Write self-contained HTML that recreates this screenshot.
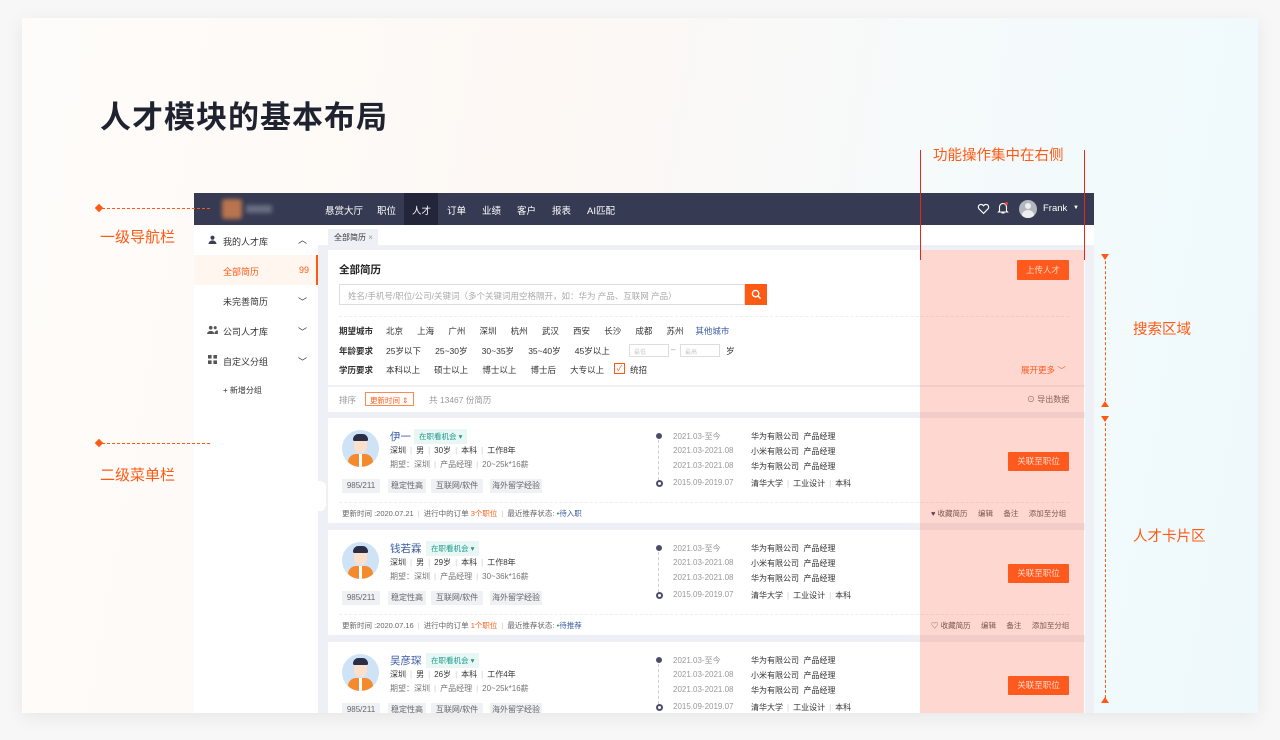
<!DOCTYPE html>
<html><head><meta charset="utf-8"><style>
*{margin:0;padding:0;box-sizing:border-box}
body{width:1280px;height:740px;background:#f7f7f7;font-family:"Liberation Sans","Noto Sans CJK SC",sans-serif;position:relative;overflow:hidden}
.a{position:absolute;white-space:nowrap}
.card{position:absolute;left:22px;top:18px;width:1236px;height:695px;background:linear-gradient(100deg,#fefcfa 0%,#fdf8f4 40%,#f4fafc 75%,#eef9fc 100%);box-shadow:0 4px 18px rgba(0,0,0,.07)}
.or{color:#ff5a14}
.nav{position:absolute;left:194px;top:193px;width:900px;height:32px;background:#363a52}
.nav .a{color:#fff;font-size:9.5px;top:10px}
.side{position:absolute;left:194px;top:225px;width:124px;height:488px;background:#fff}
.side .a{font-size:9px;color:#333}
.side .a.or{color:#ff5a14}
.gray{position:absolute;left:318px;top:225px;width:776px;height:488px;background:#eef0f5}
.wp{position:absolute;background:#fff}
.t9{font-size:8.5px;color:#333}
.g{color:#999}
.btn{position:absolute;background:#ff5a14;color:#fff;font-size:8.5px;text-align:center;border-radius:1px}
.tag{position:absolute;background:#f0f1f5;color:#666;font-size:8px;height:14px;line-height:14px;text-align:center;top:0}
.sep{color:#ccc;margin:0 4px}
</style></head><body>
<div class="card"></div>
<div class="a" style="left:100px;top:92px;font-size:31px;font-weight:bold;color:#1f2330;letter-spacing:1px">人才模块的基本布局</div>

<!-- nav -->
<div class="nav">
 <div class="a" style="left:28px;top:6px;width:20px;height:20px;background:#b8744e;border-radius:3px;filter:blur(2px)"></div>
 <div class="a" style="left:52px;top:12px;width:26px;height:8px;background:#6a6e82;filter:blur(2px)"></div>
 <div class="a" style="left:210px;top:0;width:34px;height:32px;background:#23263a"></div>
 <div class="a" style="left:131px">悬赏大厅</div>
 <div class="a" style="left:183px">职位</div>
 <div class="a" style="left:218px">人才</div>
 <div class="a" style="left:253px">订单</div>
 <div class="a" style="left:288px">业绩</div>
 <div class="a" style="left:323px">客户</div>
 <div class="a" style="left:358px">报表</div>
 <div class="a" style="left:393px">AI匹配</div>
 <svg class="a" style="left:783px;top:9px" width="13" height="13" viewBox="0 0 24 24"><path d="M12 21l-8.5-8.5a5 5 0 017-7L12 7l1.5-1.5a5 5 0 017 7z" fill="none" stroke="#fff" stroke-width="2.2"/></svg>
 <svg class="a" style="left:803px;top:8px" width="12" height="14" viewBox="0 0 24 26"><path d="M5 19V11a7 7 0 0114 0v8l2 2H3z M9 23h6" fill="none" stroke="#fff" stroke-width="2.2"/><circle cx="19" cy="4" r="3" fill="#ff3b30"/></svg>
 <div class="a" style="left:825px;top:7px;width:18px;height:18px;border-radius:50%;background:#b4b6be;overflow:hidden"><div class="a" style="left:6px;top:3px;width:6px;height:6px;border-radius:50%;background:#eee"></div><div class="a" style="left:3px;top:10px;width:12px;height:10px;border-radius:50%;background:#eee"></div></div>
 <div class="a" style="left:849px">Frank</div>
 <div class="a" style="left:879px;top:12px;font-size:6px">▼</div>
</div>

<!-- sidebar -->
<div class="side">
 <div class="a" style="left:0;top:30px;width:124px;height:30px;background:#fff6f0;border-right:2px solid #ff5a14"></div>
 <svg class="a" style="left:14px;top:10px" width="9" height="9" viewBox="0 0 10 10"><circle cx="5" cy="3" r="2.3" fill="#3a3e5a"/><path d="M0.5 10a4.5 4 0 019 0z" fill="#3a3e5a"/></svg>
 <div class="a" style="left:29px;top:10px">我的人才库</div><div class="a g" style="left:104px;top:8px">︿</div>
 <div class="a or" style="left:29px;top:40px">全部简历</div><div class="a or" style="left:105px;top:40px">99</div>
 <div class="a" style="left:29px;top:70px">未完善简历</div><div class="a g" style="left:104px;top:70px">﹀</div>
 <svg class="a" style="left:13px;top:100px" width="11" height="9" viewBox="0 0 12 10"><circle cx="4" cy="3" r="2" fill="#555"/><circle cx="9" cy="3" r="1.7" fill="#555"/><path d="M0 10a4 3.5 0 018 0z M8.5 10a3.5 3 0 013.5-4v4z" fill="#555"/></svg>
 <div class="a" style="left:29px;top:100px">公司人才库</div><div class="a g" style="left:104px;top:100px">﹀</div>
 <svg class="a" style="left:14px;top:130px" width="9" height="9" viewBox="0 0 10 10"><rect x="0" y="0" width="4" height="4" fill="#555"/><rect x="6" y="0" width="4" height="4" fill="#555"/><rect x="0" y="6" width="4" height="4" fill="#555"/><rect x="6" y="6" width="4" height="4" fill="#555"/></svg>
 <div class="a" style="left:29px;top:130px">自定义分组</div><div class="a g" style="left:104px;top:130px">﹀</div>
 <div class="a g" style="left:29px;top:160px;font-size:8px">+ 新增分组</div>
</div>

<div class="gray">
 <div class="a" style="left:0;top:0;width:776px;height:20px;background:#fff"></div>
 <div class="a" style="left:10px;top:4px;width:50px;height:16px;background:#eef0f5;font-size:8px;color:#333;padding:3px 0 0 6px">全部简历 <span class="g">×</span></div>
 <div class="a" style="left:0;top:256px;width:8px;height:30px;background:#fff;border-radius:0 6px 6px 0"></div>
</div>

<!-- search panel -->
<div class="wp" style="left:328px;top:250px;width:757px;height:135px">
 <div class="a" style="left:11px;top:12px;font-size:10.5px;font-weight:bold;color:#222">全部简历</div>
 <div class="a" style="left:11px;top:34px;width:406px;height:21px;border:1px solid #ddd;font-size:8.5px;color:#aaa;padding:5px 0 0 8px">姓名/手机号/职位/公司/关键词（多个关键词用空格隔开，如：华为 产品、互联网 产品）</div>
 <div class="a" style="left:417px;top:34px;width:22px;height:21px;background:#ff5a14"><svg style="margin:5px 0 0 6px" width="11" height="11" viewBox="0 0 12 12"><circle cx="5" cy="5" r="3.5" fill="none" stroke="#fff" stroke-width="1.5"/><path d="M7.5 7.5l3 3" stroke="#fff" stroke-width="1.5"/></svg></div>
 <div class="a" style="left:11px;top:66px;width:730px;border-top:1px dashed #eee"></div>
 <div class="a t9" style="left:11px;top:75px;font-weight:bold">期望城市</div>
 <div class="a t9" style="left:58px;top:75px">北京&nbsp;&nbsp;&nbsp;&nbsp;&nbsp;&nbsp;上海&nbsp;&nbsp;&nbsp;&nbsp;&nbsp;&nbsp;广州&nbsp;&nbsp;&nbsp;&nbsp;&nbsp;&nbsp;深圳&nbsp;&nbsp;&nbsp;&nbsp;&nbsp;&nbsp;杭州&nbsp;&nbsp;&nbsp;&nbsp;&nbsp;&nbsp;武汉&nbsp;&nbsp;&nbsp;&nbsp;&nbsp;&nbsp;西安&nbsp;&nbsp;&nbsp;&nbsp;&nbsp;&nbsp;长沙&nbsp;&nbsp;&nbsp;&nbsp;&nbsp;&nbsp;成都&nbsp;&nbsp;&nbsp;&nbsp;&nbsp;&nbsp;苏州&nbsp;&nbsp;&nbsp;&nbsp;&nbsp;<span style="color:#3a5ba0">其他城市</span></div>
 <div class="a t9" style="left:11px;top:95px;font-weight:bold">年龄要求</div>
 <div class="a t9" style="left:58px;top:95px">25岁以下&nbsp;&nbsp;&nbsp;&nbsp;&nbsp;&nbsp;25~30岁&nbsp;&nbsp;&nbsp;&nbsp;&nbsp;&nbsp;30~35岁&nbsp;&nbsp;&nbsp;&nbsp;&nbsp;&nbsp;35~40岁&nbsp;&nbsp;&nbsp;&nbsp;&nbsp;&nbsp;45岁以上</div>
 <div class="a" style="left:301px;top:94px;width:40px;height:13px;border:1px solid #ddd;font-size:6px;color:#ccc;padding:2px 4px">最低</div>
 <div class="a g" style="left:343px;top:95px;font-size:8px">–</div>
 <div class="a" style="left:352px;top:94px;width:40px;height:13px;border:1px solid #ddd;font-size:6px;color:#ccc;padding:2px 4px">最高</div>
 <div class="a t9" style="left:398px;top:95px">岁</div>
 <div class="a t9" style="left:11px;top:114px;font-weight:bold">学历要求</div>
 <div class="a t9" style="left:58px;top:114px">本科以上&nbsp;&nbsp;&nbsp;&nbsp;&nbsp;&nbsp;硕士以上&nbsp;&nbsp;&nbsp;&nbsp;&nbsp;&nbsp;博士以上&nbsp;&nbsp;&nbsp;&nbsp;&nbsp;&nbsp;博士后&nbsp;&nbsp;&nbsp;&nbsp;&nbsp;&nbsp;大专以上</div>
 <div class="a" style="left:286px;top:113px;width:11px;height:11px;border:1px solid #ff5a14;color:#ff5a14;font-size:8px;line-height:9px;text-align:center">✓</div>
 <div class="a t9" style="left:302px;top:114px">统招</div>
 <div class="a or" style="left:693px;top:114px;font-size:8.5px">展开更多 ﹀</div>
 <div class="btn" style="left:689px;top:10px;width:52px;height:20px;line-height:20px">上传人才</div>
</div>

<!-- sort bar -->
<div class="wp" style="left:328px;top:387px;width:757px;height:25px">
 <div class="a g" style="left:11px;top:7px;font-size:8.5px">排序</div>
 <div class="a or" style="left:37px;top:5px;width:49px;height:14px;border:1px solid #ff8a50;font-size:7.5px;padding:2px 0 0 4px">更新时间 ⇕</div>
 <div class="a g" style="left:101px;top:7px;font-size:8.5px">共 13467 份简历</div>
 <div class="a" style="left:699px;top:7px;font-size:8px;color:#666">⊙ 导出数据</div>
</div>

<!-- talent cards -->
<div id="cards"></div>
<script>
var d=[["伊一","30岁","8年","20~25k*16薪","2020.07.21","3个职位","待入职","#2a9d55",418,true],["钱若霖","29岁","8年","30~36k*16薪","2020.07.16","1个职位","待推荐","#2a9d55",530,false],["吴彦琛","26岁","4年","20~25k*16薪","","","","",642,false]];
var h="";
d.forEach(function(c){
var y=c[8];var H=y==642?71:105;
h+='<div class="wp" style="left:328px;top:'+y+'px;width:757px;height:'+H+'px;overflow:hidden">';
h+='<div class="a" style="left:14px;top:12px;width:37px;height:37px;border-radius:50%;background:#cfe3f7;overflow:hidden"><div class="a" style="left:6px;top:24px;width:25px;height:16px;border-radius:8px 8px 0 0;background:#f58a2c"></div><div class="a" style="left:17px;top:24px;width:3px;height:14px;background:#fff"></div><div class="a" style="left:12px;top:7px;width:13px;height:16px;border-radius:6px;background:#fde0cc"></div><div class="a" style="left:11px;top:4px;width:15px;height:7px;border-radius:7px 7px 2px 2px;background:#2b2f45"></div></div>';
h+='<div class="a" style="left:62px;top:11px;font-size:10.5px;color:#3a5ba0">'+c[0]+'</div>';
h+='<div class="a" style="left:'+(c[0].length==2?86:98)+'px;top:11px;background:#e8f6f4;color:#1a9a8a;font-size:7.5px;padding:2px 5px">在职看机会 ▾</div>';
h+='<div class="a" style="left:62px;top:27px;font-size:8px;color:#333">深圳<span class="sep">|</span>男<span class="sep">|</span>'+c[1]+'<span class="sep">|</span>本科<span class="sep">|</span>工作'+c[2]+'</div>';
h+='<div class="a" style="left:62px;top:41px;font-size:8px;color:#777">期望：深圳<span class="sep">|</span>产品经理<span class="sep">|</span>'+c[3]+'</div>';
h+='<div class="a" style="left:0;top:61px;height:14px;width:340px"><span class="tag" style="left:14px;width:38px">985/211</span><span class="tag" style="left:60px;width:38px">稳定性高</span><span class="tag" style="left:103px;width:52px">互联网/软件</span><span class="tag" style="left:162px;width:52px">海外留学经验</span></div>';
h+='<div class="a" style="left:328px;top:15px;width:6px;height:6px;border-radius:50%;border:2px solid #4a4e6a;background:#4a4e6a"></div><div class="a" style="left:330px;top:22px;height:40px;border-left:1px dashed #ccc"></div><div class="a" style="left:328px;top:62px;width:7px;height:7px;border-radius:50%;border:2px solid #4a4e6a;background:#fff"></div>';
var dt=["2021.03-至今","2021.03-2021.08","2021.03-2021.08"],co=["华为有限公司","小米有限公司","华为有限公司"];
for(var i=0;i<3;i++){h+='<div class="a g" style="left:345px;top:'+(13+i*15)+'px;font-size:8px">'+dt[i]+'</div><div class="a" style="left:423px;top:'+(13+i*15)+'px;font-size:8px;color:#333">'+co[i]+'&nbsp;&nbsp;产品经理</div>';}
h+='<div class="a g" style="left:345px;top:60px;font-size:8px">2015.09-2019.07</div><div class="a" style="left:423px;top:60px;font-size:8px;color:#333">清华大学<span class="sep">|</span>工业设计<span class="sep">|</span>本科</div>';
h+='<div class="btn" style="left:680px;top:34px;width:61px;height:19px;line-height:19px">关联至职位</div>';
if(c[4]){h+='<div class="a" style="left:11px;top:84px;width:730px;border-top:1px dashed #eee"></div>';
h+='<div class="a" style="left:14px;top:90px;font-size:7.5px;color:#666">更新时间 :'+c[4]+'<span class="sep">|</span>进行中的订单 <span class="or">'+c[5]+'</span><span class="sep">|</span>最近推荐状态: <span style="color:'+c[7]+'">•</span><span style="color:#3a5ba0">'+c[6]+'</span></div>';
h+='<div class="a" style="left:603px;top:90px;font-size:7.5px;color:#555">'+(c[9]?'<span style="color:#3a3e5a">♥</span>':'♡')+' 收藏简历&nbsp;&nbsp;&nbsp;&nbsp;&nbsp;编辑&nbsp;&nbsp;&nbsp;&nbsp;&nbsp;备注&nbsp;&nbsp;&nbsp;&nbsp;&nbsp;添加至分组</div>';}
h+='</div>';});
document.getElementById("cards").innerHTML=h;
</script>

<!-- left annotations (on top) -->
<div class="a" style="left:96px;top:205px;width:6px;height:6px;background:#ff5a14;transform:rotate(45deg)"></div>
<div class="a" style="left:102px;top:208px;width:108px;border-top:1px dashed #ff5a14"></div>
<div class="a or" style="left:100px;top:226px;font-size:15px">一级导航栏</div>
<div class="a" style="left:96px;top:440px;width:6px;height:6px;background:#ff5a14;transform:rotate(45deg)"></div>
<div class="a" style="left:102px;top:443px;width:108px;border-top:1px dashed #ff5a14"></div>
<div class="a or" style="left:100px;top:464px;font-size:15px">二级菜单栏</div>

<!-- overlay -->
<div class="a" style="left:920px;top:250px;width:164px;height:463px;background:rgba(250,90,60,.24)"></div>
<div class="a" style="left:920px;top:150px;width:1px;height:110px;background:#e8261a"></div>
<div class="a" style="left:1084px;top:150px;width:1px;height:110px;background:#e8261a"></div>
<div class="a or" style="left:933px;top:144px;font-size:14.5px">功能操作集中在右侧</div>

<!-- right annotations -->
<div class="a" style="left:1105px;top:256px;height:150px;border-left:1px dashed #ff5a14"></div>
<div class="a" style="left:1101px;top:254px;width:0;height:0;border-left:4px solid transparent;border-right:4px solid transparent;border-top:6px solid #ff5a14"></div>
<div class="a" style="left:1101px;top:401px;width:0;height:0;border-left:4px solid transparent;border-right:4px solid transparent;border-bottom:6px solid #ff5a14"></div>
<div class="a or" style="left:1133px;top:318px;font-size:14.5px">搜索区域</div>
<div class="a" style="left:1105px;top:418px;height:285px;border-left:1px dashed #ff5a14"></div>
<div class="a" style="left:1101px;top:416px;width:0;height:0;border-left:4px solid transparent;border-right:4px solid transparent;border-top:6px solid #ff5a14"></div>
<div class="a" style="left:1101px;top:697px;width:0;height:0;border-left:4px solid transparent;border-right:4px solid transparent;border-bottom:6px solid #ff5a14"></div>
<div class="a or" style="left:1133px;top:525px;font-size:14.5px">人才卡片区</div>
</body></html>
